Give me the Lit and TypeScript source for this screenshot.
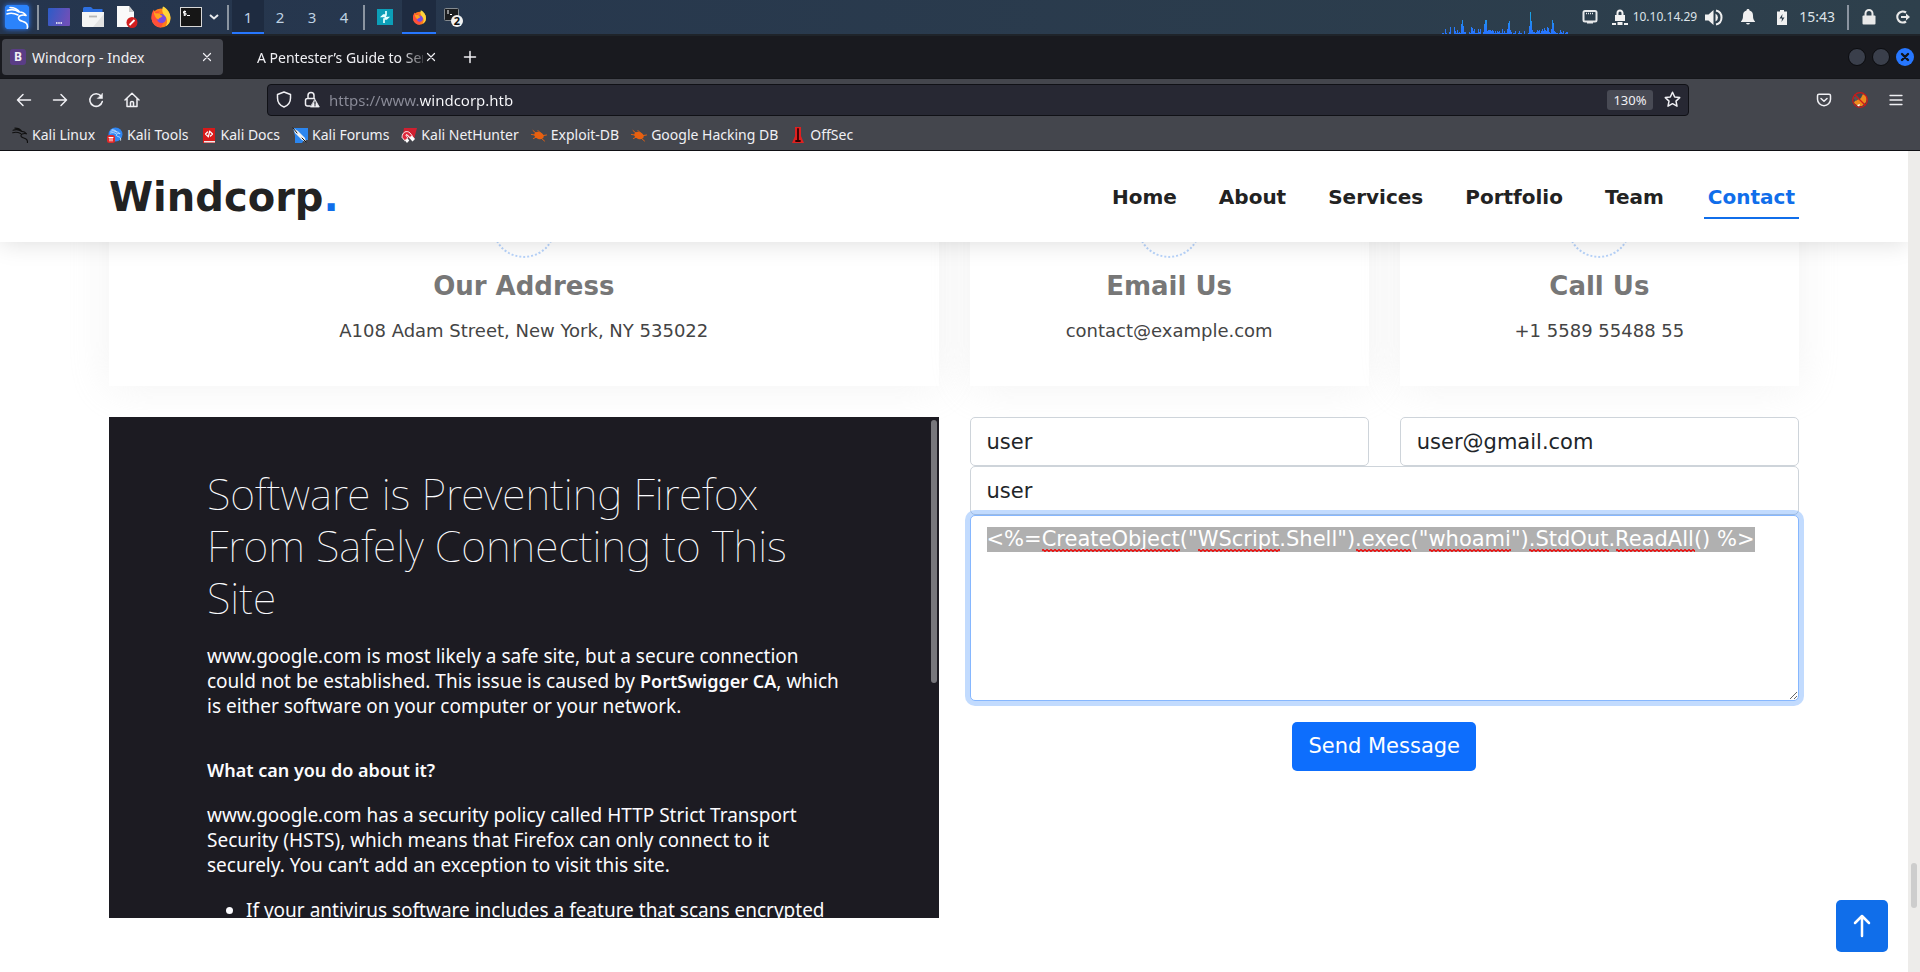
import { LitElement, html, css, svg } from "lit";
import { customElement, query, state } from "lit/decorators.js";

const foxShape = svg`
  <circle cx="11" cy="12" r="9.5" fill="#ff7b1c"/>
  <path d="M11 21.5a9.5 9.5 0 0 1-9.4-8.2C1 9 2 6 4 3.500c0 1 .5 2 1.200 2.700C6.500 5.500 8 5 10 5.300 8.500 6.200 8 7.500 8.500 8.500c.8 1 2.500.8 3 1.300-.3 1.500-2.500 1.700-3 3 .8 2.500 5 2.500 7-.5z" fill="#ff4f3a"/>
  <circle cx="11.500" cy="12.500" r="4.600" fill="#7a4be0"/>
  <path d="M13 .5c4.500 2 7.500 6.500 7.500 11.500 0 4-2 7-5 8.500 2.500-4 2-8-.5-10.500C12.500 7.500 11.500 4 13 .5z" fill="#ffd43a"/>
  <path d="M4 4c0 2 1 3 2 3.500 2-.8 4 .2 4.500 1.500 1 .5 1.500.5 2 1-1 1.800-3.500 1.500-4 3.500-2.500-.5-5.500-5-4.500-9.500z" fill="#ffa21f"/>`;

const dragon = (color: string) => svg`
  <path d="M1.500 4.500c4-1.500 8-1 11.500 1.500M1 8c4-1.500 8-.5 11 1M4 1.500c4 0 7.500 1.500 9.500 4.500 3 0 5 1 6.500 3.500-2-.8-4-.6-6 .3-1.800 1-2 3-.5 4.200 2 1.500 5 1 7 3.500 1 1.500 1.200 3.200.8 5" fill="none" stroke="${color}" stroke-width="1.600" stroke-linecap="round" stroke-linejoin="round"/>`;

const bug = svg`<ellipse cx="8" cy="8.500" rx="5" ry="3.500" transform="rotate(22 8 8.500)" fill="#e8600f"/><path d="M2 3.500l4 3.500M.5 7.500l3.500.5M2.500 11.500l3-1.500M7 3.500l3 3M12.500 8.500l3-.5M10 11l3.500 3" stroke="#e8600f" stroke-width="1"/>`;

const graph = [
  1,1,0,5,1,0,0,2,7,0,0,0,7,3,1,4,1,2,1,10,14,8,2,2,0,0,0,2,1,7,6,3,5,1,1,1,5,2,5,0,0,2,10,14,14,3,4,4,4,3,
  4,3,1,3,1,3,2,3,1,1,5,1,3,1,1,5,11,13,4,2,0,1,1,3,0,0,1,3,1,1,0,0,3,0,0,0,1,8,22,13,4,2,2,1,2,4,3,4,1,3,
  5,3,6,4,3,7,6,2,1,5,14,11,3,2,1,1,0,1,4,2,1,3,0,1,2,2
];

const bookmarks = [
  { label: "Kali Linux", icon: svg`<g transform="scale(.72)">${dragon("#101010")}</g>` },
  { label: "Kali Tools", icon: svg`<circle cx="8.500" cy="7.500" r="7" fill="#2f86f3"/><g transform="translate(3 2) scale(.5)">${dragon("#d8ecff")}</g><rect y="8" width="8" height="8" rx="2.500" fill="#e02828"/><path d="M2 10.500h4M3 10.500V14M5 10.500V14" stroke="#fff" stroke-width="1"/>` },
  { label: "Kali Docs", icon: svg`<path d="M2 1h12v15H2z" fill="#d81a1a"/><path d="M3 14h11v1.500H3z" fill="#eee"/><path d="M6.500 5 4.500 7l2 2M9.500 5l2 2-2 2M8.700 4 7.300 10" fill="none" stroke="#fff" stroke-width="1.200"/>` },
  { label: "Kali Forums", icon: svg`<path d="M1 1h15v12H12l-2 3H3V9z" fill="#2b86f0"/><path d="M1 1l5 3 7 7 1 4-4-2-7-7z" fill="#f2f2f2"/><path d="M1 1l4 5M14 15l-4-4" stroke="#111"/>` },
  { label: "Kali NetHunter", icon: svg`<path d="M3 1h13l-3 11H9L2 7z" fill="#cf2030"/><path d="M1 10c0-5 5-7 8-4l5 6-2.500 2.500-5-5.500c-1-1-2.200 0-1.200 1l3 3.500L6 16z" fill="#fff"/><path d="M1 10c0-5 5-7 8-4l2 2.500-2 2-2.500-2.500c-1-1-2.200 0-1.200 1l1.500 2L4 13.500z" fill="#e0283a" stroke="#fff" stroke-width=".8"/>` },
  { label: "Exploit-DB", icon: bug },
  { label: "Google Hacking DB", icon: bug },
  { label: "OffSec", icon: svg`<path d="M5 0h6v9l3 7H2l3-7z" fill="#df2020"/><path d="M8 2v12M6 14h4" stroke="#300" stroke-width="1.800"/>` }
];

@customElement("desktop-panel")
class DesktopPanel extends LitElement {
  static styles = css`
    :host { display: block; font: 14px/20px "Noto Sans", sans-serif; color: #dde3e8; }
    .panel { display: flex; height: 34px; justify-content: space-between; background: linear-gradient(90deg, #25354e, #2e404c); border-bottom: 2px solid #1f242a; }
    .group { display: flex; align-items: center; }
    button { border: 0; padding: 0; background: none; color: inherit; font: inherit; }
    .cell { display: flex; width: 34px; height: 34px; align-items: center; justify-content: center; }
    .narrow { width: 26px; }
    .slim { width: 20px; }
    .space { width: 32px; height: 34px; font-size: 15px; color: #bfd2e3; }
    .active { background: #1e2b40; box-shadow: inset 0 -2px #2777ff; }
    .sep { width: 2px; height: 25px; margin: 0 3px; background: #8b95a1; }
    .logo svg { box-shadow: 0 0 5px #2b7cff; border-radius: 2px; }
    .ip { font-size: 12px; }
    .clock { margin-right: 9px; }
    .graph { display: flex; align-items: flex-end; height: 34px; margin-right: 5px; }
    .bar { width: 1px; background: linear-gradient(0deg, #2777ff, #2777ff 4px, #19a9e0 22px); }
    svg { display: block; }
  `;
  render() {
    return html`
      <div class="panel">
        <div class="group">
          <button class="cell logo" aria-label="Applications">
            <svg width="24" height="24" viewBox="0 0 24 24"><rect width="24" height="24" rx="2" fill="#2b83fb"/><g transform="translate(1 1)">${dragon("#fff")}</g></svg>
          </button>
          <span class="sep"></span>
          <button class="cell" aria-label="Desktop">
            <svg width="22" height="18" viewBox="0 0 22 18"><defs><linearGradient id="d" y2=".3"><stop stop-color="#2b5cc8"/><stop offset="1" stop-color="#6d50b8"/></linearGradient></defs><rect width="22" height="18" rx="1" fill="url(#d)"/><path d="M8 15h6" stroke="#fff" stroke-width="1.500" stroke-dasharray="1.500 .75"/></svg>
          </button>
          <button class="cell" aria-label="Files">
            <svg width="22" height="20" viewBox="0 0 22 20"><path d="M1 1.500Q1 0 2.500 0H9l2 2h9.500V8H1z" fill="#2d6fe0"/><path d="M0 5h22v13.500Q22 20 20.500 20h-19Q0 20 0 18.500z" fill="#f4f4f4"/><path d="M22 7v13H11z" fill="#e2e2e2"/><path d="M7 9.500h8" stroke="#b5b5b5" stroke-width="1.800"/></svg>
          </button>
          <button class="cell" aria-label="Text editor">
            <svg width="22" height="22" viewBox="0 0 22 22"><path d="M1 0h12l5 6v15H1z" fill="#fafafa"/><path d="M13 0l5 6h-5z" fill="#c9c9c9"/><circle cx="16" cy="16.500" r="5.500" fill="#d21f1f"/><path d="M13.500 19l5-5" stroke="#fff" stroke-width="1.800"/></svg>
          </button>
          <button class="cell" aria-label="Firefox"><svg width="22" height="22" viewBox="0 0 22 22">${foxShape}</svg></button>
          <button class="cell narrow" aria-label="Terminal">
            <svg width="22" height="20" viewBox="0 0 22 20"><rect x=".5" y=".5" width="21" height="19" fill="#161616" stroke="#d8d8d8"/><path d="M6 4.500H3.500v1.700H6V8H3.500M4.700 3.500v5.500M7 8.500h3" fill="none" stroke="#fff" stroke-width="1"/></svg>
          </button>
          <button class="cell slim" aria-label="More terminals">
            <svg width="10" height="6" viewBox="0 0 10 6"><path d="M1 1l4 3.500L9 1" fill="none" stroke="#e8eaed" stroke-width="2"/></svg>
          </button>
          <span class="sep"></span>
          ${[1, 2, 3, 4].map((n) => html`<button class="space ${n === 1 ? "active" : ""}">${n}</button>`)}
          <span class="sep"></span>
          <button class="cell" aria-label="Burp Suite">
            <svg width="16" height="16" viewBox="0 0 16 16"><rect width="16" height="16" fill="#0c9fb8"/><path d="M9 2v4H6.500L5 7.500h4M7 14v-4h2.500L11 8.500H7.500" fill="none" stroke="#e6ffff" stroke-width="1.700"/></svg>
          </button>
          <button class="cell active" aria-label="Firefox window"><svg width="15" height="15" viewBox="0 0 22 22">${foxShape}</svg></button>
          <button class="cell" aria-label="Terminal windows">
            <svg width="20" height="20" viewBox="0 0 20 20"><rect x="1.500" y="1.500" width="14" height="12" rx="1" fill="#1b1d20" stroke="#858b90"/><path d="M4 4h2M4 6h2M7 7.500h2" stroke="#fff"/><circle cx="14" cy="14" r="6" fill="#f2f2f2"/><text x="14" y="18" text-anchor="middle" font-size="11" font-weight="700" font-family="Noto Sans, sans-serif" fill="#111">2</text></svg>
          </button>
        </div>
        <div class="group">
          <div class="graph">${graph.map((h) => html`<span class="bar" style="height:${h}px"></span>`)}</div>
          <span class="cell">
            <svg width="16" height="14" viewBox="0 0 16 14"><rect x="1.500" y="1" width="13" height="10.500" rx="1.500" fill="none" stroke="#e6e8ea" stroke-width="2"/><path d="M4 3.500h8" stroke="#e6e8ea" stroke-width="1.500" stroke-dasharray="1 1"/><path d="M5 12.500h6" stroke="#e6e8ea" stroke-width="2"/></svg>
          </span>
          <span class="cell narrow">
            <svg width="16" height="17" viewBox="0 0 16 17"><path d="M5.500 6V4a2.500 2.500 0 0 1 5 0v2" fill="none" stroke="#f2f2f2" stroke-width="2"/><path d="M3 6h10v6H3zM0 14h4v2H0zM5.500 13h5v3h-5zM12 14h4v2h-4z" fill="#f2f2f2"/></svg>
          </span>
          <span class="ip">10.10.14.29</span>
          <button class="cell" aria-label="Volume">
            <svg width="18" height="17" viewBox="0 0 18 17"><path d="M0 5.500h3.500L8.500 1v15l-5-4.500H0z" fill="#f0f0f0"/><path d="M10.500 4.500a4.500 4.500 0 0 1 0 8z" fill="#f0f0f0"/><path d="M11 1.500a7.200 7.200 0 0 1 0 14" fill="none" stroke="#f0f0f0" stroke-width="2"/></svg>
          </button>
          <button class="cell" aria-label="Notifications">
            <svg width="14" height="16" viewBox="0 0 14 16"><path d="M7 0c1 0 1.500.6 1.500 1.400C11 2 12 4 12 6.500c0 3 .5 4.500 2 6V13H0v-.5c1.500-1.500 2-3 2-6C2 4 3 2 5.500 1.400 5.500.6 6 0 7 0zM5 14h4q-.5 1.500-2 1.500T5 14z" fill="#f0f0f0"/></svg>
          </button>
          <span class="cell">
            <svg width="10" height="15" viewBox="0 0 10 15"><path d="M3 0h4v1.500h3V15H0V1.500h3z" fill="#f0f0f0"/><path d="M5.500 4L2.500 8.500H5L4.500 12 7.500 7.500H5z" fill="#2c3c4b"/></svg>
          </span>
          <span class="clock">15:43</span>
          <span class="sep"></span>
          <button class="cell" aria-label="Lock screen">
            <svg width="14" height="16" viewBox="0 0 14 16"><path d="M3.500 7V4.500a3.500 3.500 0 0 1 7 0V7" fill="none" stroke="#e9e9e9" stroke-width="2"/><rect x=".5" y="6.500" width="13" height="9" rx="1" fill="#e9e9e9"/></svg>
          </button>
          <button class="cell" aria-label="Log out">
            <svg width="16" height="14" viewBox="0 0 16 14"><path d="M11 2.500A5.500 5.500 0 1 0 11 11.500" fill="none" stroke="#e9e9e9" stroke-width="2.200"/><path d="M6 6h5V3.500L15 7l-4 3.500V8H6z" fill="#e9e9e9"/></svg>
          </button>
        </div>
      </div>`;
  }
}

@customElement("browser-chrome")
class BrowserChrome extends LitElement {
  static styles = css`
    :host { display: block; font: 14px/20px "Noto Sans", sans-serif; color: #f0f0f4; }
    button { border: 0; padding: 0; background: none; color: inherit; font: inherit; display: flex; align-items: center; justify-content: center; }
    svg { display: block; fill: none; stroke: #f0f0f4; stroke-width: 1.500; stroke-linecap: round; stroke-linejoin: round; }
    .tabs { display: flex; align-items: center; height: 43px; padding: 0 3px 0 2px; background: #191a1f; border-bottom: 1px solid #15161a; box-sizing: border-box; }
    .tab { display: flex; align-items: center; box-sizing: border-box; width: 221px; height: 36px; padding: 0 8px; gap: 6px; border-radius: 4px; }
    .current { background: #45474f; }
    .favicon { width: 16px; border-radius: 3px; background: #5a3d86; font-weight: 700; line-height: 16px; font-size: 12px; text-align: center; }
    .title { flex: 1; white-space: nowrap; overflow: hidden; padding-top: 2px; }
    .fade { mask-image: linear-gradient(90deg, #000 144px, transparent 176px); }
    .other { padding: 0 5px 0 34px; gap: 0; }
    .close { width: 16px; height: 16px; }
    .plus { width: 30px; height: 30px; margin-left: 11px; }
    .fill { flex: 1; }
    .win { width: 18px; height: 18px; margin: 0 3px; border-radius: 9px; border: 1px solid #0b0c0f; background: #3a3f4b; }
    .quit { border: 0; background: #2777ff; }
    .tools { display: flex; align-items: center; height: 41px; padding: 0 6px; background: #44464d; }
    .nav { display: flex; }
    .tool { width: 36px; height: 32px; }
    .address { display: flex; align-items: center; flex: 1; box-sizing: border-box; height: 32px; margin: 0 117px; padding: 0 2px; background: #272833; border: 1px solid #101116; border-radius: 4px; }
    .mini { width: 28px; height: 28px; }
    .url { flex: 1; min-width: 0; border: 0; padding: 0; margin-left: 3px; outline: 0; font: inherit; font-size: 15px; color: transparent; background: linear-gradient(90deg, #8b8c99 91px, #fbfbfe 91px); -webkit-background-clip: text; background-clip: text; }
    .zoom { width: 46px; height: 20px; border-radius: 3px; background: #484a54; font-size: 13px; margin-right: 5px; }
    .marks { display: flex; align-items: center; height: 29px; gap: 12px; padding: 0 12px 1px; background: #44464d; border-bottom: 1px solid #0f1014; }
    .mark { display: flex; align-items: center; gap: 4px; color: inherit; text-decoration: none; white-space: nowrap; }
    .mark svg { stroke: none; stroke-width: 1; }
  `;
  render() {
    const cross = html`<svg width="10" height="10" viewBox="0 0 10 10"><path d="M1.500 1.500l7 7M8.500 1.500l-7 7" stroke-width="1.200"/></svg>`;
    return html`
      <div class="tabs">
        <div class="tab current"><span class="favicon">B</span><span class="title">Windcorp - Index</span><button class="close" aria-label="Close tab">${cross}</button></div>
        <div class="tab other"><span class="title fade">A Pentester’s Guide to Server</span><button class="close" aria-label="Close tab">${cross}</button></div>
        <button class="plus" aria-label="New tab"><svg width="14" height="14" viewBox="0 0 14 14"><path d="M7 1.500v11M1.500 7h11"/></svg></button>
        <span class="fill"></span>
        <button class="win" aria-label="Minimize"></button>
        <button class="win" aria-label="Maximize"></button>
        <button class="win quit" aria-label="Close"><svg width="10" height="10" viewBox="0 0 10 10"><path d="M2 2l6 6M8 2l-6 6" stroke="#101318" stroke-width="2.400"/></svg></button>
      </div>
      <div class="tools">
        <div class="nav">
          <button class="tool" aria-label="Back"><svg width="16" height="16" viewBox="0 0 16 16"><path d="M14.500 8h-13M7 2.500L1.500 8 7 13.500"/></svg></button>
          <button class="tool" aria-label="Forward"><svg width="16" height="16" viewBox="0 0 16 16"><path d="M1.500 8h13M9 2.500L14.500 8 9 13.500"/></svg></button>
          <button class="tool" aria-label="Reload"><svg width="16" height="16" viewBox="0 0 16 16"><path d="M13 4A6.300 6.300 0 1 0 14.300 9.500"/><path d="M14.500 1.500v5h-5z" fill="#f0f0f4" stroke-width=".5"/></svg></button>
          <button class="tool" aria-label="Home"><svg width="16" height="16" viewBox="0 0 16 16"><path d="M1 8l7-6.800L15 8M3 6.500V14.500h10V6.500M6.500 14.500V10.500q0-1 1.500-1t1.500 1v4"/></svg></button>
        </div>
        <div class="address">
          <button class="mini" aria-label="Protections"><svg width="16" height="17" viewBox="0 0 16 17"><path d="M8 1l6.500 2.500v3.500c0 4-2.500 7.500-6.500 9-4-1.500-6.500-5-6.500-9V3.500z"/></svg></button>
          <button class="mini" aria-label="Connection"><svg width="16" height="17" viewBox="0 0 16 17"><path d="M4 7.500V4.500a3 3 0 0 1 6 0v3M6 15H3.500q-2 0-2-2V9.500q0-2 2-2h7"/><path d="M11 8.500l4.300 7.500H6.700z" fill="#f0f0f4" stroke-width=".8"/><path d="M11 11v2.300M11 14.700v.1" stroke="#272833" stroke-width="1.300"/></svg></button>
          <input class="url" aria-label="Address" value="https://www.windcorp.htb">
          <button class="zoom">130%</button>
          <button class="mini" aria-label="Bookmark"><svg width="17" height="17" viewBox="0 0 17 17"><path d="M8.500 1.300l2.200 4.700 5 .6-3.700 3.500 1 5.100-4.500-2.500L4 15.200l1-5.100L1.300 6.600l5-.6z"/></svg></button>
        </div>
        <button class="tool" aria-label="Pocket"><svg width="16" height="14" viewBox="0 0 16 14"><path d="M3 1.200h10q1.500 0 1.500 1.500v3.500a6.500 6.500 0 0 1-13 0V2.700Q1.500 1.200 3 1.200zM5 5.500l3 2.800 3-2.800"/></svg></button>
        <button class="tool" aria-label="FoxyProxy"><svg width="16" height="16" viewBox="0 0 16 16"><path d="M2 11c1-4 5-3 7-5l2-4 4 3-1 5-4 4H6z" fill="#ee8a1c" stroke="none"/><path d="M1 6l4-3 2 3-3 3z" fill="#555" stroke="none"/><path d="M5 13l2 2 1-3z" fill="#fff" stroke="none"/><circle cx="8" cy="8" r="7.300" stroke="#d01818" stroke-width="1.200"/><path d="M3 3l10 10" stroke="#d01818" stroke-width="1.200"/></svg></button>
        <button class="tool" aria-label="Menu"><svg width="14" height="12" viewBox="0 0 14 12"><path d="M1 1.500h12M1 6h12M1 10.500h12" stroke-width="1.300"/></svg></button>
      </div>
      <nav class="marks" aria-label="Bookmarks">
        ${bookmarks.map((b) => html`<a class="mark" href="#"><svg width="16" height="16" viewBox="0 0 16 16">${b.icon}</svg>${b.label}</a>`)}
      </nav>`;
  }
}

const payload = '<%=CreateObject("WScript.Shell").exec("whoami").StdOut.ReadAll() %>';
const misspelt = ["CreateObject", "WScript", ".exec", "whoami", ".StdOut", "ReadAll"];

@customElement("windcorp-page")
class WindcorpPage extends LitElement {
  @query(".message") message!: HTMLTextAreaElement;
  @state() waves: { left: number; width: number }[] = [];

  static styles = css`
    :host { display: flex; overflow: hidden; background: #fff; color: #444; font: 18px/27px "DejaVu Sans", sans-serif; }
    .view { position: relative; flex: 1; min-width: 0; overflow: hidden; }
    .wrap { max-width: 1690px; margin: 0 auto; }
    .header { position: relative; z-index: 1; background: #fff; box-shadow: 0 0 24px rgba(0, 0, 0, .15); }
    .bar { display: flex; align-items: center; justify-content: space-between; height: 91px; }
    .logo { margin: 0; font-size: 40px; line-height: 48px; color: #222; }
    .dot { color: #106eea; }
    .menu { display: flex; gap: 38px; font-size: 20px; line-height: 30px; font-weight: 700; }
    .link { padding: 7px 2px 5px; color: #222; text-decoration: none; border-bottom: 2px solid transparent; }
    .here { color: #106eea; border-color: #106eea; padding: 7px 4px 5px; }
    .grid { display: grid; grid-template-columns: repeat(4, minmax(0, 1fr)); gap: 31px; margin-top: -60px; }
    .wide { grid-column: span 2; }
    .card { display: flex; flex-direction: column; align-items: center; box-sizing: border-box; height: 204px; padding-top: 12px; background: #fff; box-shadow: 0 0 39px rgba(214, 215, 216, .3); }
    .ring { width: 60px; height: 60px; border: 2px dotted #b8d4fb; border-radius: 50%; }
    .card h2 { margin: 11px 0 14px; font-size: 26px; line-height: 34px; color: #777; }
    .card p { margin: 0; }
    .frame { position: relative; box-sizing: border-box; height: 501px; padding: 51px 90px 0 98px; overflow: hidden; background: #1c1b22; color: #fbfbfe; font: 19px/25px "Noto Sans", sans-serif; }
    .frame h2 { margin: 0 0 20px; font-size: 43px; line-height: 52px; font-weight: 100; }
    .frame p, .frame h3 { margin: 0 0 20px; }
    .frame h3 { margin-top: 39px; font-size: 18px; font-weight: 600; }
    .frame ul { margin: 0; padding-left: 39px; }
    .frame b { font-size: 18px; font-weight: 600; }
    .thumb { position: absolute; top: 3px; right: 2px; width: 6px; height: 263px; border-radius: 3px; background: #77777c; }
    .form { display: grid; grid-template-columns: repeat(2, minmax(0, 1fr)); column-gap: 31px; align-content: start; }
    .field { box-sizing: border-box; width: 100%; height: 49px; padding: 0 16px; border: 1px solid #ced4da; border-radius: 5px; background: #fff; color: #212529; font: 21px/25px "DejaVu Sans", sans-serif; }
    .both { grid-column: span 2; }
    .area { position: relative; grid-column: span 2; display: grid; }
    .message { height: 186px; padding: 11px 16px; outline: 0; border-color: #86b7fe; box-shadow: 0 0 0 5px rgba(13, 110, 253, .25); resize: vertical; }
    .message::selection { background: #b0b0b0; color: #fff; }
    .waves { position: absolute; top: 34px; left: 17px; right: 17px; height: 3px; pointer-events: none; overflow: hidden; }
    .wave { position: absolute; top: 0; height: 3px; }
    .send { grid-column: span 2; justify-self: center; height: 49px; margin-top: 21px; padding: 0 16px; border: 0; border-radius: 5px; background: #0d6efd; color: #fff; font: 21px/31px "DejaVu Sans", sans-serif; }
    .top { position: absolute; right: 20px; bottom: 20px; display: flex; align-items: center; justify-content: center; width: 52px; height: 52px; border-radius: 5px; background: #106eea; }
    .scroll { position: relative; width: 12px; background: #edecea; }
    .handle { position: absolute; right: 3px; bottom: 64px; width: 6px; height: 45px; border-radius: 3px; background: #cdcdcd; }
  `;

  firstUpdated() {
    this.message.focus();
    this.message.select();
    const pen = document.createElement("canvas").getContext("2d")!;
    pen.font = '21px "DejaVu Sans"';
    this.waves = misspelt.map((word) => ({
      left: Math.round(pen.measureText(payload.slice(0, payload.indexOf(word))).width),
      width: Math.round(pen.measureText(word).width)
    }));
  }

  render() {
    return html`
      <div class="view">
        <header class="header">
          <div class="wrap bar">
            <h1 class="logo">Windcorp<span class="dot">.</span></h1>
            <nav class="menu">
              ${["Home", "About", "Services", "Portfolio", "Team", "Contact"].map((t) => html`<a class="link ${t === "Contact" ? "here" : ""}" href="#">${t}</a>`)}
            </nav>
          </div>
        </header>
        <main class="wrap grid">
          <section class="card wide"><span class="ring"></span><h2>Our Address</h2><p>A108 Adam Street, New York, NY 535022</p></section>
          <section class="card"><span class="ring"></span><h2>Email Us</h2><p>contact@example.com</p></section>
          <section class="card"><span class="ring"></span><h2>Call Us</h2><p>+1 5589 55488 55</p></section>
          <section class="frame wide">
            <h2>Software is Preventing Firefox From Safely Connecting to This Site</h2>
            <p>www.google.com is most likely a safe site, but a secure connection could not be established. This issue is caused by <b>PortSwigger CA</b>, which is either software on your computer or your network.</p>
            <h3>What can you do about it?</h3>
            <p>www.google.com has a security policy called HTTP Strict Transport Security (HSTS), which means that Firefox can only connect to it securely. You can’t add an exception to visit this site.</p>
            <ul><li>If your antivirus software includes a feature that scans encrypted</li></ul>
            <span class="thumb"></span>
          </section>
          <form class="form wide">
            <input class="field" aria-label="Your name" value="user">
            <input class="field" type="email" aria-label="Your email" value="user@gmail.com">
            <input class="field both" aria-label="Subject" value="user">
            <div class="area">
              <textarea class="field message" aria-label="Message" .value=${payload}></textarea>
              <div class="waves">
                ${this.waves.map((w) => html`<svg class="wave" style="left:${w.left}px;width:${w.width}px"><defs><pattern id="z" width="4" height="3" patternUnits="userSpaceOnUse"><path d="M-1 3l2-2 2 2 2-2" transform="translate(0 -.5)" fill="none" stroke="#f00000" stroke-width="1.200"/></pattern></defs><rect width="100%" height="3" fill="url(#z)"/></svg>`)}
              </div>
            </div>
            <button class="send" type="button">Send Message</button>
          </form>
        </main>
        <a class="top" href="#" aria-label="Back to top"><svg width="18" height="26" viewBox="0 0 18 26"><path d="M9 23V3M2 10l7-7 7 7" fill="none" stroke="#fff" stroke-width="2.500" stroke-linecap="round" stroke-linejoin="round"/></svg></a>
      </div>
      <div class="scroll"><span class="handle"></span></div>`;
  }
}

@customElement("app-root")
class AppRoot extends LitElement {
  static styles = css`
    :host { display: flex; flex-direction: column; height: 100vh; }
    .page { flex: 1; min-height: 0; }
  `;
  render() {
    return html`<desktop-panel></desktop-panel><browser-chrome></browser-chrome><windcorp-page class="page"></windcorp-page>`;
  }
}
